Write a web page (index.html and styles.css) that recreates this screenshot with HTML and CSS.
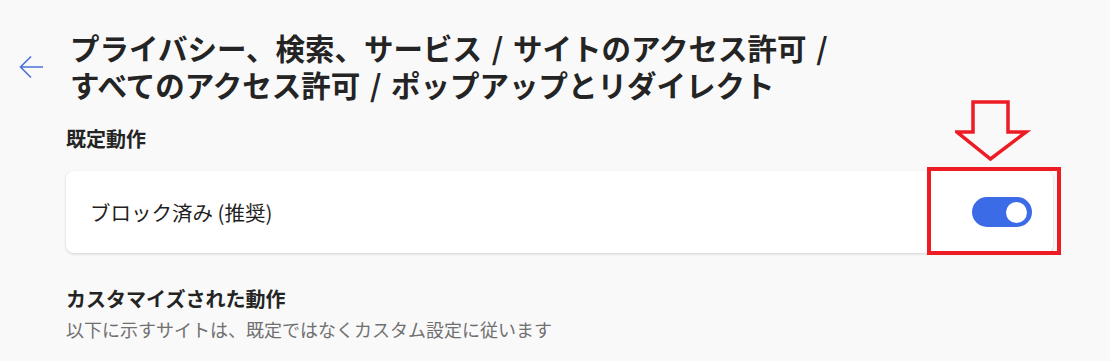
FILE: index.html
```html
<!DOCTYPE html>
<html lang="ja">
<head>
    <meta charset="UTF-8">
    <title>ポップアップとリダイレクト</title>
    <link rel="stylesheet" href="styles.css">
</head>
<body>
    <div class="page">
        <div class="header">
            <a class="back" href="#">
                <svg width="26" height="24" viewBox="0 0 26 24">
                    <path d="M24 12H2M12 1.5L1.5 12L12 22.5" fill="none" stroke="#4a6fd8" stroke-width="1.6"/>
                </svg>
            </a>
            <h1>
                <span class="line">プライバシー、検索、サービス / サイトのアクセス許可 /</span>
                <span class="line">すべてのアクセス許可 / ポップアップとリダイレクト</span>
            </h1>
        </div>

        <h2 class="label">既定動作</h2>
        <div class="card">
            <span>ブロック済み (推奨)</span>
            <div class="toggle on"><div class="knob"></div></div>
        </div>

        <h2 class="section-title">カスタマイズされた動作</h2>
        <p class="hint">以下に示すサイトは、既定ではなくカスタム設定に従います</p>

        <svg class="mark-arrow" width="76" height="62" viewBox="0 0 76 62">
            <path d="M18 2H53V32H71L35.5 59L2 32H18Z" fill="none" stroke="#ed1c24" stroke-width="3.5" stroke-linejoin="miter"/>
        </svg>
        <div class="mark-box"></div>
    </div>
</body>
</html>
```

FILE: styles.css
```css
body {
    margin: 0;
    background: #f9f9f9;
    font-family: "Noto Sans CJK JP", "Noto Sans", sans-serif;
    color: #1f1f1f;
}
.page {
    position: relative;
    width: 1110px;
    height: 361px;
    overflow: hidden;
}
.header {
    display: flex;
    align-items: center;
    padding: 29px 0 0 19px;
}
.back {
    display: flex;
    width: 51px;
    margin-top: 2px;
}
h1 {
    margin: 0;
    font-size: 29.5px;
    font-weight: 700;
    color: #242424;
    word-spacing: 3px;
}
h1 .line {
    display: block;
    line-height: 37px;
}
.label {
    margin: 22px 0 0 66px;
    font-size: 20px;
    line-height: 28px;
    font-weight: 700;
    color: #242424;
}
.card {
    display: flex;
    align-items: center;
    justify-content: space-between;
    margin: 18px 0 0 66px;
    width: 987px;
    height: 82px;
    box-sizing: border-box;
    padding: 0 21px 0 24px;
    background: #fff;
    border-radius: 8px;
    box-shadow: 0 1px 3px rgba(0,0,0,0.16);
    font-size: 20.5px;
}
.toggle {
    width: 60px;
    height: 30px;
    border-radius: 15px;
    background: #3c6be8;
    display: flex;
    align-items: center;
    justify-content: flex-end;
    padding: 0 5px;
    box-sizing: border-box;
}
.knob {
    width: 21px;
    height: 21px;
    border-radius: 50%;
    background: #fff;
}
.section-title {
    margin: 32px 0 0 66px;
    font-size: 20px;
    line-height: 28px;
    font-weight: 700;
    color: #242424;
}
.hint {
    margin: 3px 0 0 66px;
    font-size: 18px;
    line-height: 26px;
    color: #707070;
}
.mark-arrow {
    position: absolute;
    left: 955px;
    top: 100px;
}
.mark-box {
    position: absolute;
    left: 927px;
    top: 167px;
    width: 134px;
    height: 88px;
    box-sizing: border-box;
    border: 4px solid #ed1c24;
}
```
